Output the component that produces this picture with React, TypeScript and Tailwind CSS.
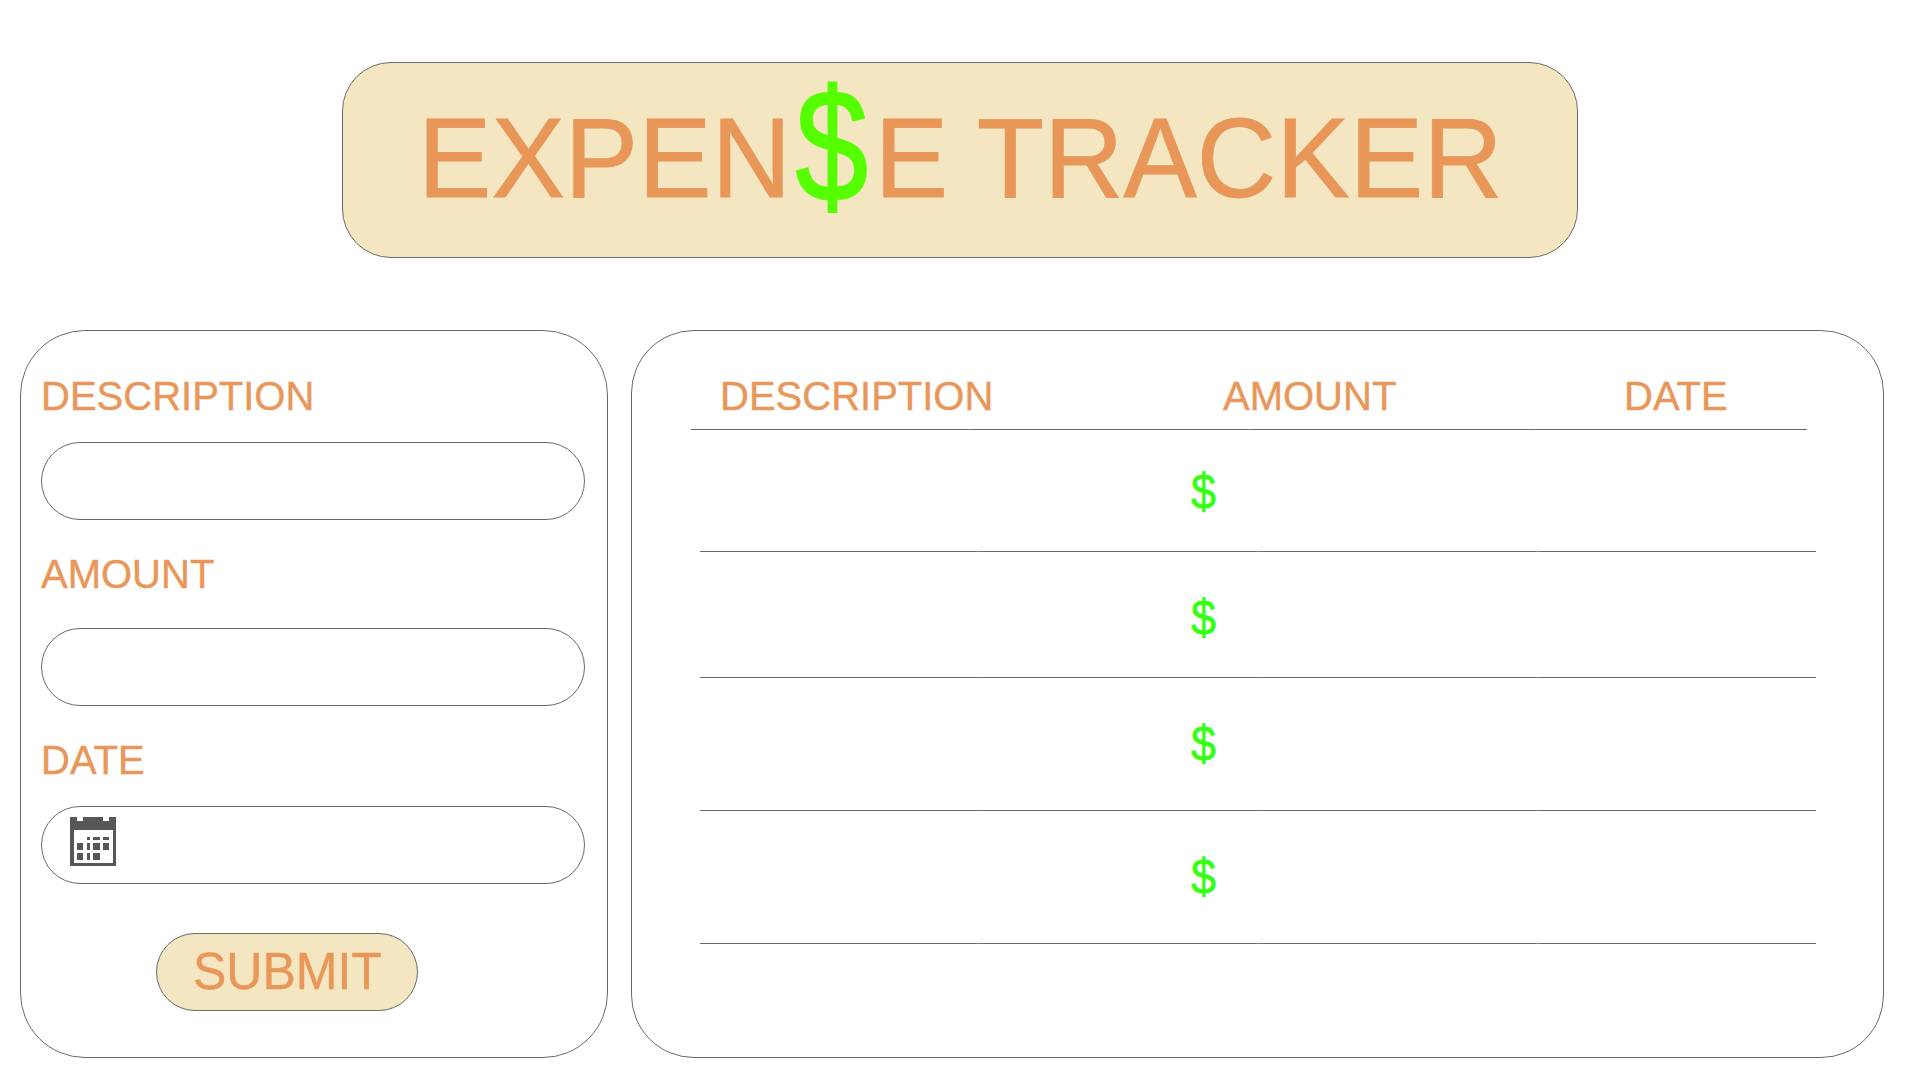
import type { ReactNode } from "react";

function Label({ children, className = "" }: { children: ReactNode; className?: string }) {
  return (
    <span
      className={`block h-10 origin-[0_85%] -translate-y-[0.4px] scale-y-[1.03] text-[40px] leading-none whitespace-nowrap text-[#e99659] [-webkit-text-stroke:0.4px_#e99659] ${className}`}
    >
      {children}
    </span>
  );
}

function Field({ icon, name, className = "" }: { icon?: ReactNode; name: string; className?: string }) {
  return (
    <div className={`flex h-[78px] w-[544px] items-start rounded-full border border-[#696969] ${className}`}>
      {icon}
      <input aria-label={name} className="h-full min-w-0 flex-1 bg-transparent px-6 text-3xl outline-none" />
    </div>
  );
}

function CalendarIcon() {
  return (
    <svg
      className="mt-[10px] ml-[28px] h-[49px] w-[46px] shrink-0"
      viewBox="0 0 46 49"
      fill="#575757"
      shapeRendering="crispEdges"
    >
      <path
        fillRule="evenodd"
        d="M0 0H7V4H13V0H33V4H39V0H46V49H0ZM4 13V46H43V13Z"
      />
      <path d="M17 20h3v3h-3zM23 20h7v3h-7zM33 20h6v3h-6z" />
      <path d="M7 26h6v7h-6zM17 26h3v7h-3zM23 26h7v7h-7zM33 26h6v7h-6z" />
      <path d="M7 36h6v7h-6zM17 36h3v7h-3zM23 36h7v7h-7z" />
    </svg>
  );
}

function Rule({ className = "" }: { className?: string }) {
  return (
    <div className={`flex h-px w-[1116px] gap-px bg-[#a0a0a0] ${className}`}>
      <div className="flex-1 bg-[#696969]" />
      <div className="flex-1 bg-[#696969]" />
      <div className="flex-1 bg-[#696969]" />
      <div className="flex-1 bg-[#696969]" />
    </div>
  );
}

function Row({ className }: { className: string }) {
  return (
    <div className={`ml-[68px] flex flex-col justify-between ${className}`}>
      <span className="ml-[490px] block h-[50px] w-[28px] -translate-x-[0.5px] translate-y-[0.5px] scale-x-[0.9] text-[50px] leading-none text-[#33ff11] [-webkit-text-stroke:0.6px_#33ff11]">
        $
      </span>
      <Rule />
    </div>
  );
}

export default function App() {
  return (
    <div className="flex h-[1080px] w-[1920px] flex-col overflow-hidden bg-white font-['Liberation_Sans',Arial,sans-serif]">
      <header className="mt-[62px] ml-[342px] h-[196px] w-[1236px] rounded-[49px] border border-[#696969] bg-[#f4e6c1] pt-[8px] pl-[75px]">
        <h1 className="h-[150px] origin-[0_127px] -translate-y-[0.6px] scale-y-[1.03] text-[110px] leading-none tracking-[0.05px] whitespace-nowrap text-[#e99659] [-webkit-text-stroke:0.8px_#e99659]">
          EXPEN
          <span className="inline-block -translate-x-px translate-y-[2px] scale-x-[0.87] scale-y-[1.03] text-[150px] text-[#55ff00] [-webkit-text-stroke:2px_#55ff00]">
            $
          </span>
          E TRACKER
        </h1>
      </header>

      <main className="mt-[72px] ml-5 flex gap-[23px]">
        <form className="flex h-[728px] w-[588px] flex-col rounded-[65px] border border-[#696969] pl-[20px]">
          <Label className="mt-[45px]">DESCRIPTION</Label>
          <Field name="Description" className="mt-[26px]" />
          <Label className="mt-[34px]">AMOUNT</Label>
          <Field name="Amount" className="mt-[34px]" />
          <Label className="mt-[34px]">DATE</Label>
          <Field name="Date" className="mt-[26px]" icon={<CalendarIcon />} />
          <button
            type="button"
            className="mt-[49px] ml-[115px] flex h-[78px] w-[262px] rounded-full border border-[#696969] bg-[#f4e6c1] pt-[13px] pl-[36px]"
          >
            <span className="block origin-[0_85%] scale-y-[1.03] text-[50px] leading-none text-[#e99659] [-webkit-text-stroke:0.4px_#e99659]">
              SUBMIT
            </span>
          </button>
        </form>

        <section className="flex h-[728px] w-[1253px] flex-col rounded-[63px] border border-[#696969]">
          <div className="mt-[45px] flex pl-[88px]">
            <Label className="w-[503px]">DESCRIPTION</Label>
            <Label className="w-[401px]">AMOUNT</Label>
            <Label>DATE</Label>
          </div>
          <Rule className="mt-[13px] ml-[59px]" />
          <Row className="mt-[36px] h-[86px]" />
          <Row className="mt-[40px] h-[86px]" />
          <Row className="mt-[40px] h-[93px]" />
          <Row className="mt-[40px] h-[93px]" />
        </section>
      </main>
    </div>
  );
}
